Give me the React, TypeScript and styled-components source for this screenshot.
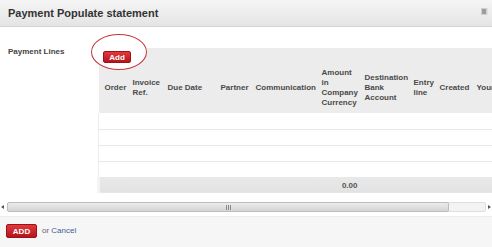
import React from "react";
import styled, { createGlobalStyle } from "styled-components";

const Global = createGlobalStyle`
  html, body {
    margin: 0;
    padding: 0;
    background: #ffffff;
    overflow: hidden;
  }
  * { box-sizing: border-box; }
`;

const columns = [
  { label: "Order", width: 31 },
  { label: "Invoice Ref.", width: 35 },
  { label: "Due Date", width: 53 },
  { label: "Partner", width: 35 },
  { label: "Communication", width: 66 },
  { label: "Amount in Company Currency", width: 43 },
  { label: "Destination Bank Account", width: 49 },
  { label: "Entry line", width: 26 },
  { label: "Created", width: 37 },
  { label: "Your Reference", width: 80 },
];

const App = () => {
  return (
    <Dialog>
      <Global />
      <Header>
        <Title>Payment Populate statement</Title>
        <Close />
      </Header>
      <Body>
        <FormRow>
          <FieldLabel>Payment Lines</FieldLabel>
          <Grid>
            <Toolbar>
              <Circle />
              <RedButton $small>Add</RedButton>
            </Toolbar>
            <Table>
              <colgroup>
                {columns.map((c) => (
                  <col key={c.label} style={{ width: c.width }} />
                ))}
              </colgroup>
              <thead>
                <tr>
                  {columns.map((c) => (
                    <Th key={c.label}>{c.label}</Th>
                  ))}
                </tr>
              </thead>
              <tbody>
                {[0, 1, 2, 3].map((r) => (
                  <tr key={r}>
                    {columns.map((c) => (
                      <Td key={c.label} />
                    ))}
                  </tr>
                ))}
              </tbody>
              <tfoot>
                <tr>
                  {columns.map((c, i) => (
                    <Tf key={c.label} $num={i === 5}>
                      {i === 5 ? "0.00" : ""}
                    </Tf>
                  ))}
                </tr>
              </tfoot>
            </Table>
          </Grid>
        </FormRow>
        <ScrollBar>
          <Arrow $dir="left" />
          <Track>
            <Thumb>
              <svg width="5" height="5" viewBox="0 0 5 5">
                <path d="M0.5 0v5M2.5 0v5M4.5 0v5" stroke="#8a8a8a" strokeWidth="1" />
              </svg>
            </Thumb>
          </Track>
          <Arrow $dir="right" />
        </ScrollBar>
      </Body>
      <Footer>
        <RedButton>ADD</RedButton>
        <Or>
          or <CancelLink>Cancel</CancelLink>
        </Or>
      </Footer>
    </Dialog>
  );
};

export default App;

const Dialog = styled.div`
  width: 492px;
  height: 247px;
  display: flex;
  flex-direction: column;
  font-family: "Liberation Sans", Arial, sans-serif;
  background: #ffffff;
  overflow: hidden;
`;

const Header = styled.div`
  height: 27px;
  flex: none;
  display: flex;
  align-items: center;
  justify-content: space-between;
  padding: 0 5px 0 8px;
  background: linear-gradient(#f5f5f5, #e4e4e4);
  border-bottom: 1px solid #d4d4d4;
`;

const Title = styled.h1`
  margin: 0;
  font-size: 11px;
  font-weight: 700;
  color: #333333;
`;

const Close = styled.span`
  width: 6px;
  height: 7px;
  margin-top: -3px;
  background: #9c9c9c;
  border: 1px solid #cfcfcf;
  box-shadow: 1px 0 0 #e0e0e0;
`;

const Body = styled.div`
  flex: 1;
  display: flex;
  flex-direction: column;
  overflow: hidden;
`;

const FormRow = styled.div`
  display: flex;
  padding-top: 21px;
`;

const FieldLabel = styled.div`
  width: 97px;
  flex: none;
  padding: 0 0 0 8px;
  font-size: 8px;
  font-weight: 700;
  line-height: 10px;
  color: #444444;
  margin-top: -1px;
`;

const Grid = styled.div`
  flex: none;
  width: 455px;
  position: relative;
`;

const Toolbar = styled.div`
  height: 15px;
  display: flex;
  align-items: flex-start;
  padding: 3px 0 0 6px;
  background: #ececec;
  position: relative;
`;

const Circle = styled.span`
  position: absolute;
  left: -6px;
  top: -14px;
  width: 56px;
  height: 36px;
  border: 1.5px solid #c7343b;
  border-radius: 50%;
  background: #ffffff;
`;

const RedButton = styled.button<{ $small?: boolean }>`
  position: relative;
  flex: none;
  display: inline-flex;
  align-items: center;
  justify-content: center;
  width: ${(p) => (p.$small ? "28px" : "31px")};
  height: ${(p) => (p.$small ? "12px" : "14px")};
  padding: 0;
  font-family: inherit;
  font-size: 8px;
  font-weight: 700;
  color: #ffffff;
  background: linear-gradient(#e13a3f, #b5151b);
  border: 1px solid #9e1217;
  border-radius: 2px;
`;

const Table = styled.table`
  table-layout: fixed;
  border-collapse: collapse;
  width: 455px;
`;

const Th = styled.th`
  height: 50px;
  padding: 0 3px;
  background: #ececec;
  font-size: 8px;
  font-weight: 700;
  line-height: 10px;
  color: #4a4a4a;
  text-align: left;
  vertical-align: middle;
  &:first-child {
    padding-left: 6px;
  }
`;

const Td = styled.td`
  height: 16px;
  padding: 0;
  border-bottom: 1px solid #e8e8e8;
  &:first-child {
    border-left: 1px solid #ececec;
  }
`;

const Tf = styled.td<{ $num?: boolean }>`
  height: 16px;
  padding: 0 4px 0 0;
  background: linear-gradient(#e9e9e9, #e2e2e2);
  border-top: 1px solid #cfcfcf;
  font-size: 8px;
  font-weight: 700;
  color: #555555;
  text-align: ${(p) => (p.$num ? "right" : "left")};
  &:first-child {
    border-left: 3px solid #f4f4f4;
  }
`;

const ScrollBar = styled.div`
  margin-top: 8px;
  height: 12px;
  display: flex;
  align-items: center;
  padding: 0 1px;
`;

const Arrow = styled.span<{ $dir: "left" | "right" }>`
  width: 0;
  height: 0;
  border-top: 2px solid transparent;
  border-bottom: 2px solid transparent;
  ${(p) =>
    p.$dir === "left"
      ? "border-right: 3px solid #555; margin-right: 3px;"
      : "border-left: 3px solid #555; margin-left: 2px;"}
`;

const Track = styled.div`
  flex: 1;
  height: 10px;
  background: #f3f3f3;
  border: 1px solid #dedede;
  border-radius: 2px;
  display: flex;
`;

const Thumb = styled.div`
  width: 440px;
  height: 100%;
  margin-left: -1px;
  margin-top: -1px;
  box-sizing: content-box;
  border: 1px solid #bdbdbd;
  border-radius: 2px;
  background: linear-gradient(#ececec, #d4d4d4);
  display: flex;
  align-items: center;
  justify-content: center;
`;

const Footer = styled.div`
  height: 31px;
  flex: none;
  display: flex;
  align-items: flex-start;
  gap: 5px;
  padding: 7px 0 0 6px;
  background: #f6f6f6;
  border-top: 1px solid #ededed;
`;

const Or = styled.span`
  font-size: 8px;
  line-height: 14px;
  color: #666666;
`;

const CancelLink = styled.a`
  color: #3f5e93;
  cursor: pointer;
`;
